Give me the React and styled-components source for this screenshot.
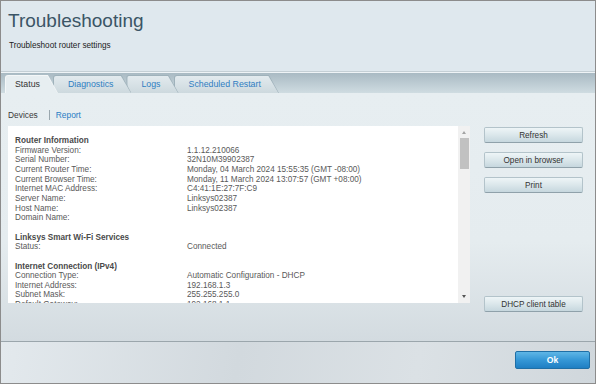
import React from "react";
import styled, { createGlobalStyle } from "styled-components";

const GlobalStyle = createGlobalStyle`
  html, body {
    margin: 0;
    padding: 0;
    background: #ffffff;
  }
  body {
    font-family: "Liberation Sans", Arial, sans-serif;
  }
`;

const Window = styled.div`
  width: 596px;
  height: 384px;
  box-sizing: border-box;
  border: 1px solid #8c8c8c;
  display: flex;
  flex-direction: column;
  overflow: hidden;
`;

const Header = styled.header`
  height: 71px;
  flex: none;
  box-sizing: border-box;
  padding: 9px 0 0 7px;
  background: #dfe8ee;
  border-bottom: 1px solid #c4cfd5;

  h1 {
    margin: 0;
    font-size: 19px;
    font-weight: normal;
    line-height: 22px;
    color: #3b5566;
  }
  p {
    margin: 9px 0 0 1px;
    font-size: 8.2px;
    line-height: 10px;
    color: #222;
  }
`;

const TabBar = styled.nav`
  height: 21px;
  flex: none;
  box-sizing: border-box;
  border-top: 1px solid #eef3f6;
  background: linear-gradient(180deg, #a9bac3 0%, #bccbd2 50%, #cfdce1 100%);
  display: flex;
  align-items: flex-end;
  padding-left: 4px;
`;

const Tab = styled.div`
  position: relative;
  z-index: ${(p) => p.$z};
  height: 18px;
  margin-left: ${(p) => (p.$first ? "0" : "-5px")};
  background: ${(p) => (p.$active ? "#f4f7f8" : "#9fb2bb")};
  clip-path: polygon(0 0, calc(100% - 10px) 0, 100% 100%, 0 100%);
  border-radius: 3px 0 0 0;
  padding: 1px 0 0 1px;
  box-sizing: border-box;
  display: flex;
`;

const TabFace = styled.div`
  flex: 1;
  clip-path: polygon(0 0, calc(100% - 10.5px) 0, calc(100% - 0.5px) 100%, 0 100%);
  border-radius: 2px 0 0 0;
  background: ${(p) =>
    p.$active ? "#e7eef1" : "linear-gradient(180deg, #e2eaee 0%, #cdd9de 100%)"};
  color: ${(p) => (p.$active ? "#333" : "#2f7ec2")};
  font-size: 8.8px;
  line-height: 17px;
  padding: 0 18px 0 ${(p) => (p.$first ? "9px" : "14px")};
  white-space: nowrap;
`;

const Content = styled.main`
  flex: 1;
  display: flex;
  flex-direction: column;
  padding: 0 12px 0 7px;
  background: linear-gradient(180deg, #e7eef1 0%, #e5ecef 60%, #d3dbe0 100%);
`;

const SubNav = styled.div`
  display: flex;
  align-items: center;
  height: 14px;
  margin-top: 15px;
  font-size: 8.4px;
  color: #333;
`;

const SubLink = styled.span`
  color: ${(p) => (p.$link ? "#2a7dc4" : "#3a3a3a")};
`;

const Divider = styled.span`
  width: 1px;
  height: 10px;
  background: #9aa7ae;
  margin: 0 6px 0 11px;
`;

const Body = styled.div`
  display: flex;
  align-items: flex-start;
  margin-top: 4px;
`;

const LogBox = styled.div`
  width: 462px;
  height: 177px;
  background: #fff;
  display: flex;
`;

const LogText = styled.div`
  flex: 1;
  overflow: hidden;
  padding: 10px 0 0 7px;
  font-size: 8.2px;
  line-height: 9.65px;
  color: #595959;
`;

const Section = styled.div`
  & + & {
    margin-top: 9.65px;
  }
`;

const SectionTitle = styled.div`
  font-weight: bold;
  color: #4a4a4a;
`;

const Row = styled.div`
  display: grid;
  grid-template-columns: 172px 1fr;
  white-space: nowrap;
`;

const ScrollTrack = styled.div`
  width: 12px;
  background: #f1f1f1;
  display: flex;
  flex-direction: column;
  align-items: center;
`;

const Arrow = styled.div`
  width: 0;
  height: 0;
  border-left: 2.5px solid transparent;
  border-right: 2.5px solid transparent;
  ${(p) =>
    p.$down
      ? "border-top: 3px solid #555; margin-top: auto; margin-bottom: 5px;"
      : "border-bottom: 3px solid #a3a3a3; margin-top: 5px;"}
`;

const Thumb = styled.div`
  width: 9px;
  height: 31px;
  margin-top: 4px;
  background: #c1c1c1;
`;

const ButtonColumn = styled.div`
  display: flex;
  flex-direction: column;
  gap: 9px;
  margin-left: 14px;
  margin-top: 1px;
`;

const Button = styled.button`
  width: 99px;
  height: 16px;
  padding: 0;
  margin: 0;
  margin-top: ${(p) => p.$push || 0}px;
  font-family: "Liberation Sans", Arial, sans-serif;
  font-size: 8.2px;
  color: #333;
  border: 1px solid #b3c3ca;
  border-bottom-color: #8fa1aa;
  border-radius: 2px;
  background: linear-gradient(180deg, #eef5f7 0%, #dbe7eb 50%, #c6d7de 100%);
`;

const Footer = styled.footer`
  height: 42px;
  flex: none;
  box-sizing: border-box;
  border-top: 1px solid #9ba6ac;
  background: linear-gradient(100deg, #e3e9ed 0%, #d2d9de 40%, #dbe1e5 70%, #d0d7dc 100%);
  display: flex;
  justify-content: flex-end;
  align-items: flex-start;
  padding: 9px 5px 0 0;
`;

const OkButton = styled.button`
  width: 75px;
  height: 18px;
  padding: 0;
  font-family: "Liberation Sans", Arial, sans-serif;
  font-size: 8.6px;
  font-weight: bold;
  color: #fff;
  border: 1px solid #1f6fa6;
  border-radius: 2px;
  background: linear-gradient(180deg, #5fb6e6 0%, #3597d6 50%, #1f7fc3 100%);
`;

const tabs = ["Status", "Diagnostics", "Logs", "Scheduled Restart"];

const sections = [
  {
    title: "Router Information",
    rows: [
      ["Firmware Version:", "1.1.12.210066"],
      ["Serial Number:", "32N10M39902387"],
      ["Current Router Time:", "Monday, 04 March 2024 15:55:35 (GMT -08:00)"],
      ["Current Browser Time:", "Monday, 11 March 2024 13:07:57 (GMT +08:00)"],
      ["Internet MAC Address:", "C4:41:1E:27:7F:C9"],
      ["Server Name:", "Linksys02387"],
      ["Host Name:", "Linksys02387"],
      ["Domain Name:", ""],
    ],
  },
  {
    title: "Linksys Smart Wi-Fi Services",
    rows: [["Status:", "Connected"]],
  },
  {
    title: "Internet Connection (IPv4)",
    rows: [
      ["Connection Type:", "Automatic Configuration - DHCP"],
      ["Internet Address:", "192.168.1.3"],
      ["Subnet Mask:", "255.255.255.0"],
      ["Default Gateway:", "192.168.1.1"],
    ],
  },
];

export default function App() {
  return (
    <>
      <GlobalStyle />
      <Window>
        <Header>
          <h1>Troubleshooting</h1>
          <p>Troubleshoot router settings</p>
        </Header>
        <TabBar>
          {tabs.map((t, i) => (
            <Tab key={t} $active={i === 0} $first={i === 0} $z={10 - i}>
              <TabFace $active={i === 0} $first={i === 0}>
                {t}
              </TabFace>
            </Tab>
          ))}
        </TabBar>
        <Content>
          <SubNav>
            <SubLink>Devices</SubLink>
            <Divider />
            <SubLink $link>Report</SubLink>
          </SubNav>
          <Body>
            <LogBox>
              <LogText>
                {sections.map((s) => (
                  <Section key={s.title}>
                    <SectionTitle>{s.title}</SectionTitle>
                    {s.rows.map(([k, v]) => (
                      <Row key={k}>
                        <span>{k}</span>
                        <span>{v}</span>
                      </Row>
                    ))}
                  </Section>
                ))}
              </LogText>
              <ScrollTrack>
                <Arrow />
                <Thumb />
                <Arrow $down />
              </ScrollTrack>
            </LogBox>
            <ButtonColumn>
              <Button>Refresh</Button>
              <Button>Open in browser</Button>
              <Button>Print</Button>
              <Button $push={94}>DHCP client table</Button>
            </ButtonColumn>
          </Body>
        </Content>
        <Footer>
          <OkButton>Ok</OkButton>
        </Footer>
      </Window>
    </>
  );
}
